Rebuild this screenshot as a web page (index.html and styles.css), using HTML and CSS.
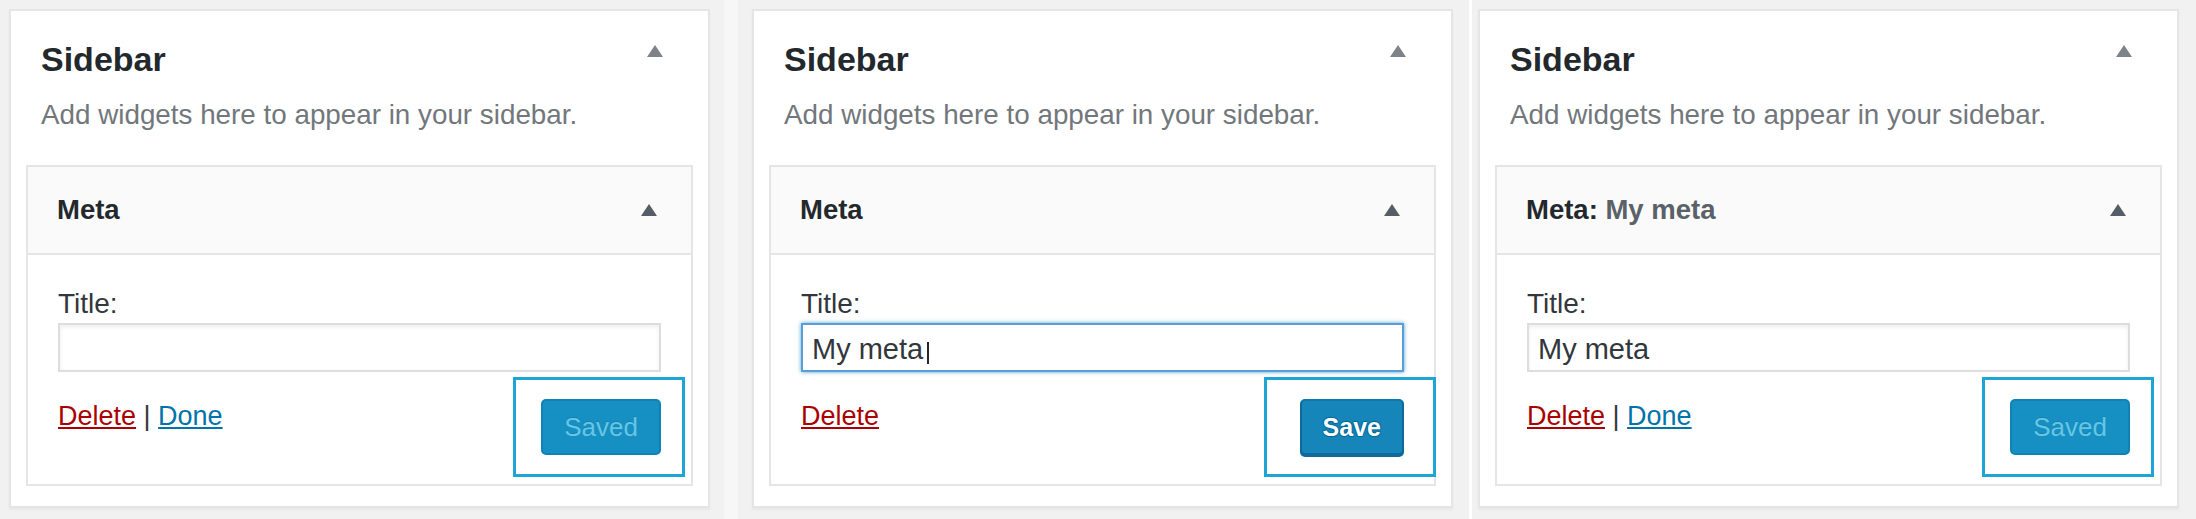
FILE: index.html
```html
<!DOCTYPE html>
<html lang="en">
<head>
<meta charset="utf-8">
<title>Sidebar widget states</title>
<link rel="stylesheet" href="styles.css">
</head>
<body>
<main class="board">

  <section class="shot shot-1">
    <div class="sidebar">
      <div class="sidebar-name">
        <h2>Sidebar</h2>
        <svg class="toggle toggle-light" viewBox="0 0 16 12" aria-hidden="true"><polygon points="0,12 8,0 16,12"/></svg>
      </div>
      <p class="sidebar-description">Add widgets here to appear in your sidebar.</p>
      <div class="widget">
        <div class="widget-top">
          <h3 class="widget-title">Meta</h3>
          <svg class="toggle toggle-dark" viewBox="0 0 16 12" aria-hidden="true"><polygon points="0,12 8,0 16,12"/></svg>
        </div>
        <div class="widget-inside">
          <label class="field-label" for="t1">Title:</label>
          <div class="field"><input id="t1" class="text-input" type="text" value=""></div>
          <div class="widget-actions">
            <div class="widget-links"><a class="link-delete" href="#">Delete</a> | <a class="link-done" href="#">Done</a></div>
            <div class="callout"><button class="button button-saved" disabled>Saved</button></div>
          </div>
        </div>
      </div>
    </div>
  </section>

  <div class="sep sep-soft"></div>

  <section class="shot shot-2">
    <div class="sidebar">
      <div class="sidebar-name">
        <h2>Sidebar</h2>
        <svg class="toggle toggle-light" viewBox="0 0 16 12" aria-hidden="true"><polygon points="0,12 8,0 16,12"/></svg>
      </div>
      <p class="sidebar-description">Add widgets here to appear in your sidebar.</p>
      <div class="widget">
        <div class="widget-top">
          <h3 class="widget-title">Meta</h3>
          <svg class="toggle toggle-dark" viewBox="0 0 16 12" aria-hidden="true"><polygon points="0,12 8,0 16,12"/></svg>
        </div>
        <div class="widget-inside">
          <label class="field-label" for="t2">Title:</label>
          <div class="field"><input id="t2" class="text-input is-focused" type="text" value="My meta"><span class="caret"></span></div>
          <div class="widget-actions">
            <div class="widget-links"><a class="link-delete" href="#">Delete</a></div>
            <div class="callout callout-wide"><button class="button button-save">Save</button></div>
          </div>
        </div>
      </div>
    </div>
  </section>

  <div class="sep sep-white"></div>

  <section class="shot shot-3">
    <div class="sidebar">
      <div class="sidebar-name">
        <h2>Sidebar</h2>
        <svg class="toggle toggle-light" viewBox="0 0 16 12" aria-hidden="true"><polygon points="0,12 8,0 16,12"/></svg>
      </div>
      <p class="sidebar-description">Add widgets here to appear in your sidebar.</p>
      <div class="widget">
        <div class="widget-top">
          <h3 class="widget-title">Meta:<span class="in-widget-title"> My meta</span></h3>
          <svg class="toggle toggle-dark" viewBox="0 0 16 12" aria-hidden="true"><polygon points="0,12 8,0 16,12"/></svg>
        </div>
        <div class="widget-inside">
          <label class="field-label" for="t3">Title:</label>
          <div class="field"><input id="t3" class="text-input" type="text" value="My meta"></div>
          <div class="widget-actions">
            <div class="widget-links"><a class="link-delete" href="#">Delete</a> | <a class="link-done" href="#">Done</a></div>
            <div class="callout"><button class="button button-saved" disabled>Saved</button></div>
          </div>
        </div>
      </div>
    </div>
  </section>

</main>
</body>
</html>
```

FILE: styles.css
```css
html, body {
  margin: 0;
  padding: 0;
  background: #f1f1f1;
}

body {
  font-family: "Liberation Sans", Arial, sans-serif;
  color: #32373c;
  overflow: hidden;
}

.board {
  display: flex;
  width: 2196px;
  height: 519px;
}

.shot {
  box-sizing: border-box;
  height: 519px;
  padding-top: 9px;
  background: #f1f1f1;
  flex: none;
}

.shot-1 { width: 724px; padding-left: 9px; }
.shot-2 { width: 731px; padding-left: 14px; }
.shot-3 { width: 724px; padding-left: 6px; }

.sep { flex: none; height: 519px; }
.sep-soft { width: 14px; background: #f7f7f7; }
.sep-white { width: 3px; background: #ffffff; }

.sidebar {
  box-sizing: border-box;
  width: 701px;
  background: #fff;
  border: 2px solid #e5e5e5;
  box-shadow: 0 2px 2px rgba(0, 0, 0, 0.04);
  padding: 0 15px 20px;
}

.sidebar-name {
  display: flex;
  justify-content: space-between;
  align-items: flex-start;
  padding: 28px 15px 0;
}

.sidebar-name h2 {
  margin: 0;
  font-size: 34px;
  line-height: 40px;
  font-weight: 700;
  color: #23282d;
}

.toggle {
  width: 16px;
  height: 12px;
  flex: none;
}

.toggle-light {
  margin-top: 6px;
  margin-right: 15px;
  fill: #7e8389;
}

.toggle-dark {
  fill: #555d66;
}

.sidebar-description {
  margin: 18px 15px 32px;
  font-size: 27.8px;
  line-height: 36px;
  color: #72777c;
}

.widget-top {
  display: flex;
  justify-content: space-between;
  align-items: center;
  height: 86px;
  padding: 0 34px 0 29px;
  background: #fafafa;
  border: 2px solid #e5e5e5;
}

.widget-title {
  margin: 0;
  font-size: 27.5px;
  line-height: 32px;
  font-weight: 700;
  color: #23282d;
}

.in-widget-title {
  color: #5b6168;
}

.widget-inside {
  border: 2px solid #e5e5e5;
  border-top: 0;
  padding: 32px 30px 29px;
  background: #fff;
}

.field-label {
  display: block;
  font-size: 28px;
  line-height: 34px;
  color: #32373c;
}

.field {
  position: relative;
  margin-top: 2px;
}

.text-input {
  display: block;
  box-sizing: border-box;
  width: 100%;
  height: 49px;
  margin: 0;
  padding: 3px 9px 0;
  border: 2px solid #dddddd;
  border-radius: 0;
  background: #fff;
  box-shadow: inset 0 2px 4px rgba(0, 0, 0, 0.07);
  font-family: "Liberation Sans", Arial, sans-serif;
  font-size: 29px;
  color: #32373c;
  outline: none;
}

.text-input.is-focused {
  border-color: #5b9dd9;
  box-shadow: 0 0 4px rgba(30, 140, 190, 0.8);
}

.caret {
  position: absolute;
  left: 126px;
  top: 19px;
  width: 2px;
  height: 22px;
  background: #23282d;
}

.widget-actions {
  display: flex;
  justify-content: space-between;
  align-items: flex-start;
  margin-top: 27px;
}

.widget-links {
  font-size: 27px;
  line-height: 34px;
  color: #32373c;
}

.widget-links a {
  text-decoration: underline;
  text-decoration-thickness: 2px;
  text-underline-offset: 2px;
}

.link-delete { color: #a00; }
.link-done { color: #0073aa; }

.callout {
  position: relative;
}

.callout::after {
  content: "";
  position: absolute;
  top: -22px;
  bottom: -22px;
  left: -28px;
  right: -24px;
  border: 3px solid #1ea5d7;
  pointer-events: none;
}

.callout-wide::after {
  left: -36px;
  right: -32px;
}

.button {
  display: block;
  box-sizing: border-box;
  height: 56px;
  margin: 0;
  padding: 0 21px;
  border: 2px solid;
  border-radius: 5px;
  font-family: "Liberation Sans", Arial, sans-serif;
  line-height: 52px;
  cursor: pointer;
}

.button-saved {
  font-size: 26px;
  background: #168fc3;
  border-color: #0f82b6;
  color: #66c6e4;
  text-shadow: 0 -1px 0 rgba(0, 0, 0, 0.1);
}

.button-save {
  font-size: 25px;
  font-weight: 700;
  background: #1686ba;
  border-color: #0f77aa #0d6a9b #0d6a9b;
  box-shadow: 0 2px 0 #0d6a9b;
  color: #fff;
  text-shadow: 0 -1px 1px #006799, 1px 0 1px #006799, 0 1px 1px #006799, -1px 0 1px #006799;
}
```
